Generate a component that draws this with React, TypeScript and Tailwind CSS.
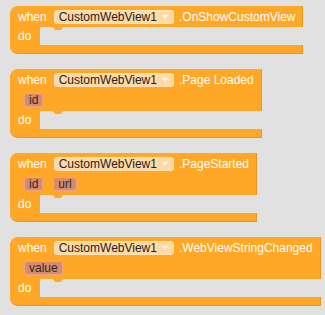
import React from "react";

type EventBlock = {
  event: string;
  params: string[];
};

const blocks: EventBlock[] = [
  { event: ".OnShowCustomView", params: [] },
  { event: ".Page Loaded", params: ["id"] },
  { event: ".PageStarted", params: ["id", "url"] },
  { event: ".WebViewStringChanged", params: ["value"] },
];

// 组件下拉框
const ComponentDropdown = ({ name }: { name: string }) => (
  <div className="flex items-center h-[14px] pl-[4px] pr-[5px] rounded-[3px] bg-[#ffd9a6] border border-[#ffe3bd] text-[#222]">
    <span className="leading-none">{name}</span>
    <svg className="ml-[5px] mt-[1px]" width="6" height="4" viewBox="0 0 6 4">
      <path d="M0 0 L6 0 L3 4 Z" fill="#fff6e6" />
    </svg>
  </div>
);

// 参数小块
const ParamChip = ({ label }: { label: string }) => (
  <div className="flex items-center h-[14px] px-[4px] rounded-[3px] bg-[#d98a6c] border border-[#eaa588] text-[#2a2a2a]">
    <span className="leading-none">{label}</span>
  </div>
);

const Block = ({ event, params }: EventBlock) => (
  <div className="flex flex-col w-fit text-[12px] font-['Liberation_Sans',Arial,sans-serif]">
    {/* header */}
    <div className="bg-[#ffa828] rounded-tl-[8px] border-r border-[#e8961e] pr-[7px]">
      <div className="flex items-center h-[21px] pl-[8px] text-white">
        <span>when</span>
        <div className="ml-[7px]">
          <ComponentDropdown name="CustomWebView1" />
        </div>
        <span className="ml-[5px]">{event}</span>
      </div>
      {params.length > 0 && (
        <div className="flex items-center gap-[10px] h-[21px] pl-[14px] pb-[1px]">
          {params.map((p) => (
            <ParamChip key={p} label={p} />
          ))}
        </div>
      )}
    </div>

    {/* do slot */}
    <div className="flex h-[18px]">
      <div className="w-[30px] bg-[#ffa828] flex items-center pl-[8px] text-white">
        <span>do</span>
      </div>
      <div className="relative flex-1 bg-[#e1e1e1] rounded-l-[5px]">
        <svg className="absolute left-[12px] top-0" width="12" height="4" viewBox="0 0 12 4">
          <path d="M0 0 C2 0 2 3 4 3 L8 3 C10 3 10 0 12 0 Z" fill="#ffa828" />
        </svg>
      </div>
    </div>

    {/* bottom arm */}
    <div className="h-[9px] bg-[#ffa828] rounded-bl-[8px] border-r border-b border-[#e8961e]" />
  </div>
);

export default function App() {
  return (
    <div className="w-[325px] h-[315px] bg-[#e1e1e1] pl-[10px] pt-[6px] flex flex-col gap-[15px]">
      {blocks.map((b) => (
        <Block key={b.event} event={b.event} params={b.params} />
      ))}
    </div>
  );
}
